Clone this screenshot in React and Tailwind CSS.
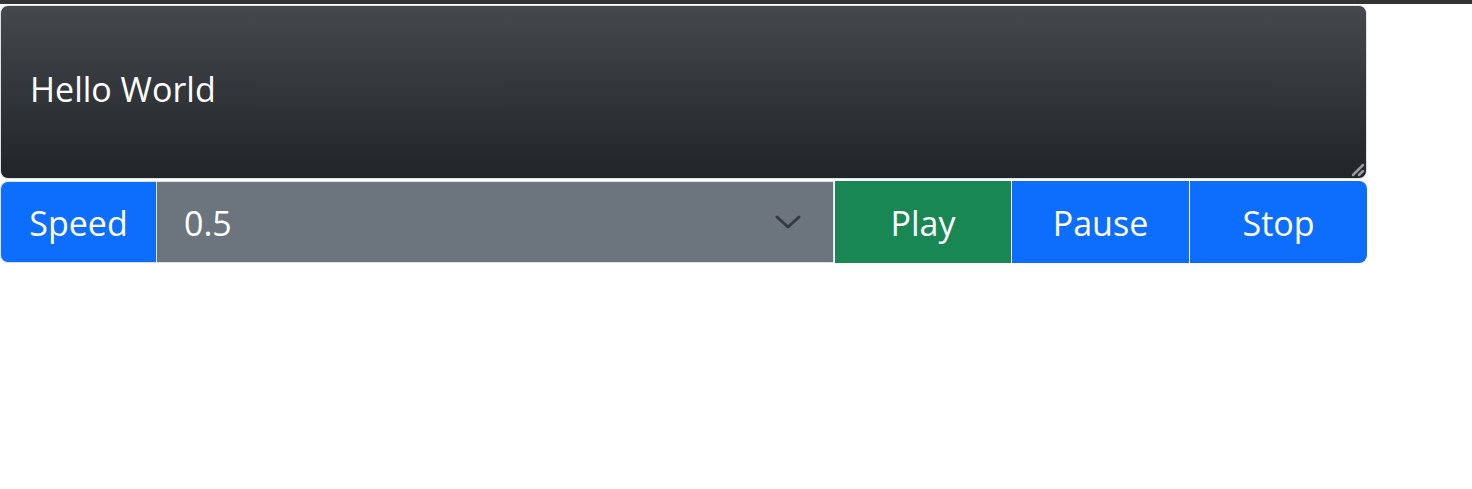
export default function App() {
  const font = { fontFamily: '"Open Sans", "Noto Sans", sans-serif' };
  return (
    <div className="w-[1472px] h-[489px] bg-white" style={font}>
      <div className="h-[4px] bg-[#333333]" />
      <div className="w-[1367px] pt-[1px]">
        <div className="relative h-[174px] rounded-lg border border-[#dee2e6] bg-gradient-to-b from-[#45484d] to-[#212529] pl-[29px] pt-[63px]">
          <div className="text-[34px] leading-[40px] text-white">Hello World</div>
          <svg className="absolute right-[1px] bottom-[1px]" width="16" height="16" viewBox="0 0 16 16">
            <line x1="4" y1="14" x2="14" y2="4" stroke="#9a9a9a" strokeWidth="2.5" strokeLinecap="round" />
            <line x1="10" y1="14" x2="14" y2="10" stroke="#9a9a9a" strokeWidth="2.5" strokeLinecap="round" />
          </svg>
        </div>
        <div className="mt-[2px] flex h-[82px] text-[34px] text-white">
          <div className="flex w-[156px] items-center justify-center rounded-l-lg border border-r-0 border-[#dee2e6] bg-[#0d6efd] pt-[2px]">Speed</div>
          <div className="relative flex w-[678px] items-center border border-[#dee2e6] bg-[#6c757d] pl-[27px] pt-[2px]">
            <span>0.5</span>
            <svg className="absolute left-[618px] top-[32px]" width="26" height="16" viewBox="0 0 26 16">
              <path d="M2 3 L13 13 L24 3" fill="none" stroke="#343a40" strokeWidth="3" strokeLinecap="round" strokeLinejoin="round" />
            </svg>
          </div>
          <div className="flex w-[177px] items-center justify-center border-l border-white bg-[#198754] pt-[2px]">Play</div>
          <div className="flex w-[178px] items-center justify-center border-l border-white bg-[#0d6efd] pt-[2px]">Pause</div>
          <div className="flex w-[178px] items-center justify-center rounded-r-lg border-l border-white bg-[#0d6efd] pt-[2px]">Stop</div>
        </div>
      </div>
    </div>
  );
}
